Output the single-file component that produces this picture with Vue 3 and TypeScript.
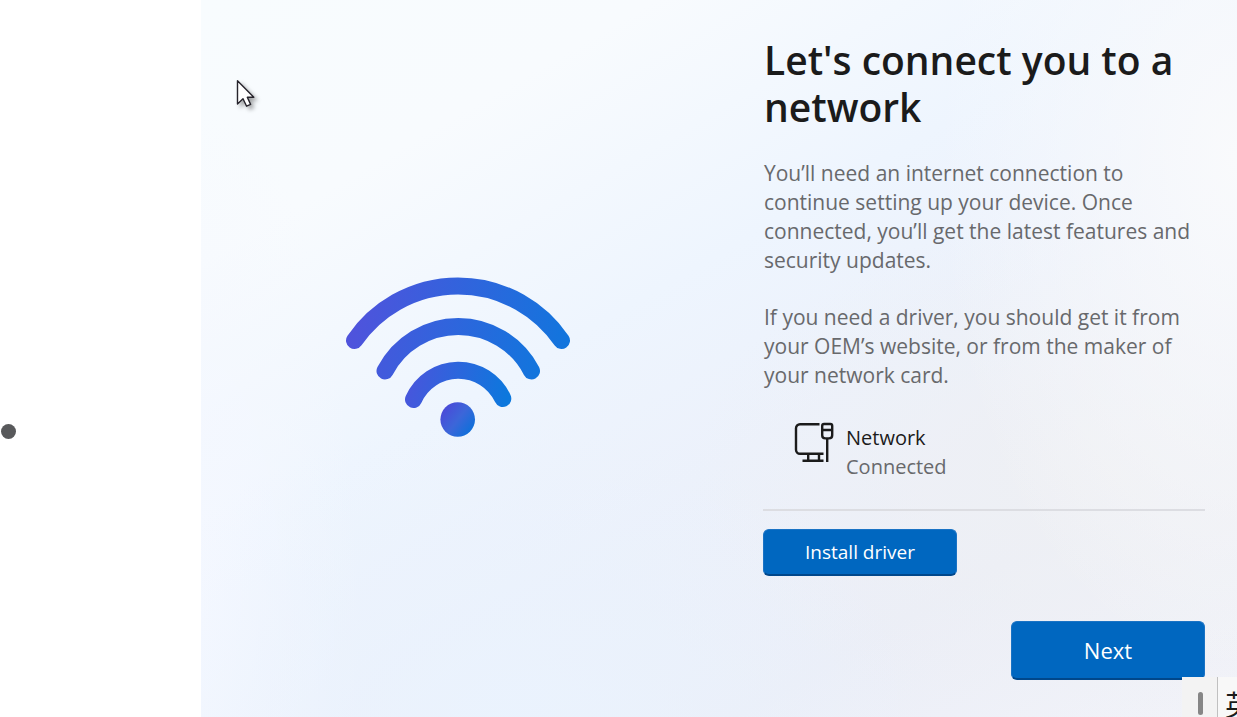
<script setup lang="ts">
interface NetworkItem {
  name: string
  status: string
}

const paragraphs: string[] = [
  'You’ll need an internet connection to continue setting up your device. Once connected, you’ll get the latest features and security updates.',
  'If you need a driver, you should get it from your OEM’s website, or from the maker of your network card.',
]

const networks: NetworkItem[] = [{ name: 'Network', status: 'Connected' }]
</script>

<template>
  <div class="page">
    <div class="gutter"><span class="bullet"></span></div>
    <main class="setup">
      <div class="art">
        <svg class="wifi" viewBox="340 270 236 174" role="img" aria-label="Wi-Fi">
          <defs>
            <linearGradient id="arc1" gradientUnits="userSpaceOnUse" x1="354" y1="310" x2="566" y2="340">
              <stop offset="0" stop-color="#4f53dc" />
              <stop offset="1" stop-color="#1275dd" />
            </linearGradient>
            <linearGradient id="arc2" gradientUnits="userSpaceOnUse" x1="380" y1="340" x2="538" y2="370">
              <stop offset="0" stop-color="#4459dc" />
              <stop offset="1" stop-color="#1275dd" />
            </linearGradient>
            <linearGradient id="arc3" gradientUnits="userSpaceOnUse" x1="412" y1="375" x2="508" y2="395">
              <stop offset="0" stop-color="#4657dc" />
              <stop offset="1" stop-color="#0c78dd" />
            </linearGradient>
            <linearGradient id="dot" gradientUnits="userSpaceOnUse" x1="444" y1="409" x2="472" y2="430">
              <stop offset="0" stop-color="#4a4bd8" />
              <stop offset="0.5" stop-color="#3c66d9" />
              <stop offset="1" stop-color="#0f70da" />
            </linearGradient>
          </defs>
          <g fill="none" stroke-width="17" stroke-linecap="round">
            <path stroke="url(#arc1)" d="M354.5 340.5A125.5 125.5 0 0 1 561.5 340.5" />
            <path stroke="url(#arc2)" d="M385 371A82.5 82.5 0 0 1 531.5 371" />
            <path stroke="url(#arc3)" d="M413.5 399.5A49 49 0 0 1 502.8 398.5" />
          </g>
          <circle cx="457.7" cy="419.5" r="17.3" fill="url(#dot)" />
        </svg>
      </div>

      <section class="panel">
        <h1>Let's connect you to a network</h1>
        <p v-for="text in paragraphs" :key="text">{{ text }}</p>
        <ul class="networks">
          <li v-for="item in networks" :key="item.name">
            <svg class="device" viewBox="0 0 40 40" aria-hidden="true">
              <g fill="none" stroke="#1b1b1b" stroke-width="2.4">
                <path d="M25.5 2.2H6a4 4 0 0 0-4 4v21.6a4 4 0 0 0 4 4h23.5" />
                <path d="M14.2 32v6.5M25 32v6.5M8.5 38.8h21" />
                <path d="M28.2 3.8q0-1.8 1.8-1.8h6.4q1.8 0 1.8 1.8v9.4q0 3.2-3.2 3.2h-3.6q-3.2 0-3.2-3.2z" />
                <path d="M28.2 8h10M33.2 16.5V40" />
              </g>
            </svg>
            <div class="label">
              <strong>{{ item.name }}</strong>
              <span>{{ item.status }}</span>
            </div>
          </li>
        </ul>
        <button type="button" class="install">Install driver</button>
        <button type="button" class="next">Next</button>
      </section>

      <svg class="cursor" viewBox="0 0 24 32" aria-hidden="true">
        <path d="M1.5 1.8V25L7 19.8L10.6 27.2L14.6 25.4L11.3 18.3H17.8Z" fill="#fff" stroke="#26242c" stroke-width="1.4" stroke-linejoin="round" />
      </svg>
    </main>

    <div class="ime">
      <span class="grip"></span>
      <span class="mode" lang="zh">英</span>
    </div>
  </div>
</template>

<style>
body {
  margin: 0;
}
</style>

<style scoped>
.page {
  position: relative;
  display: flex;
  min-height: 100vh;
  overflow: hidden;
  background: #fff;
  font-family: 'Open Sans', 'Noto Sans', sans-serif;
}

.gutter {
  flex: 0 0 201px;
  box-sizing: border-box;
  padding: 424px 0 0 1px;
}

.bullet {
  display: block;
  width: 15px;
  height: 15px;
  border-radius: 50%;
  background: #58595b;
}

.setup {
  position: relative;
  flex: 1;
  display: grid;
  grid-template-columns: minmax(0, 1fr) 442px;
  column-gap: 48px;
  box-sizing: border-box;
  padding-right: 32px;
  background:
    radial-gradient(ellipse 300px 520px at 100% 22%, rgba(249, 250, 252, 1), rgba(249, 250, 252, 0)),
    radial-gradient(ellipse 420px 260px at 88% 66%, rgba(239, 240, 243, 0.9), rgba(239, 240, 243, 0)),
    radial-gradient(ellipse 420px 300px at 30% 100%, rgba(234, 243, 254, 0.9), rgba(234, 243, 254, 0)),
    radial-gradient(ellipse 160px 500px at 0% 85%, rgba(245, 248, 255, 1), rgba(245, 248, 255, 0)),
    linear-gradient(150deg, #f8fcfe 0%, #f8fbfe 20%, #eef5fe 42%, #ecf1fb 58%, #ebeef7 78%, #f2f3f9 100%);
}

.art {
  display: flex;
  justify-content: center;
  align-items: center;
  padding-bottom: 4px;
}

.wifi {
  width: 236px;
  height: 174px;
}

.panel {
  display: flex;
  flex-direction: column;
  padding: 36px 0 37px;
}

h1 {
  margin: 0 0 29px 1px;
  font-size: 39px;
  font-weight: 600;
  line-height: 47px;
  color: #1b1b1b;
}

p {
  margin: 0 0 28px 1px;
  font-size: 21px;
  line-height: 29px;
  color: #68696c;
}

.networks {
  margin: 0 0 18px;
  padding: 4px 0 28px 31px;
  border-bottom: 2px solid #dcdde2;
  list-style: none;
}

.networks li {
  display: flex;
  gap: 12px;
}

.device {
  width: 40px;
  height: 40px;
}

.label {
  display: flex;
  flex-direction: column;
  padding-top: 1px;
  font-size: 20px;
  line-height: 29px;
  color: #68696c;
}

.label strong {
  font-weight: 400;
  color: #1b1b1b;
}

button {
  width: 194px;
  padding: 0;
  border: 1px solid #1a73c5;
  border-bottom: 2px solid #00478b;
  border-radius: 6px;
  background: #0067c0;
  color: #fff;
  font-family: inherit;
}

.install {
  height: 47px;
  font-size: 19px;
}

.next {
  align-self: flex-end;
  height: 59px;
  margin-top: auto;
  font-size: 22px;
}

.cursor {
  position: absolute;
  top: 79px;
  left: 35px;
  width: 24px;
  height: 32px;
  filter: drop-shadow(3px 3px 2px rgba(0, 0, 0, 0.35));
}

.ime {
  position: absolute;
  right: 0;
  bottom: 0;
  display: flex;
  width: 55px;
  height: 40px;
  overflow: hidden;
  background: #f3f3f3;
}

.grip {
  flex: 0 0 5px;
  height: 23px;
  margin: 15px 14px 0 16px;
  border-radius: 3px;
  background: #868686;
}

.mode {
  flex: 1 0 auto;
  border-left: 1px solid #c0c0c0;
  background: #f8f8f8;
  padding: 9px 0 0 7px;
  font-family: 'Noto Sans CJK SC', sans-serif;
  font-size: 28px;
  line-height: 36px;
  color: #1b1b1b;
}
</style>
